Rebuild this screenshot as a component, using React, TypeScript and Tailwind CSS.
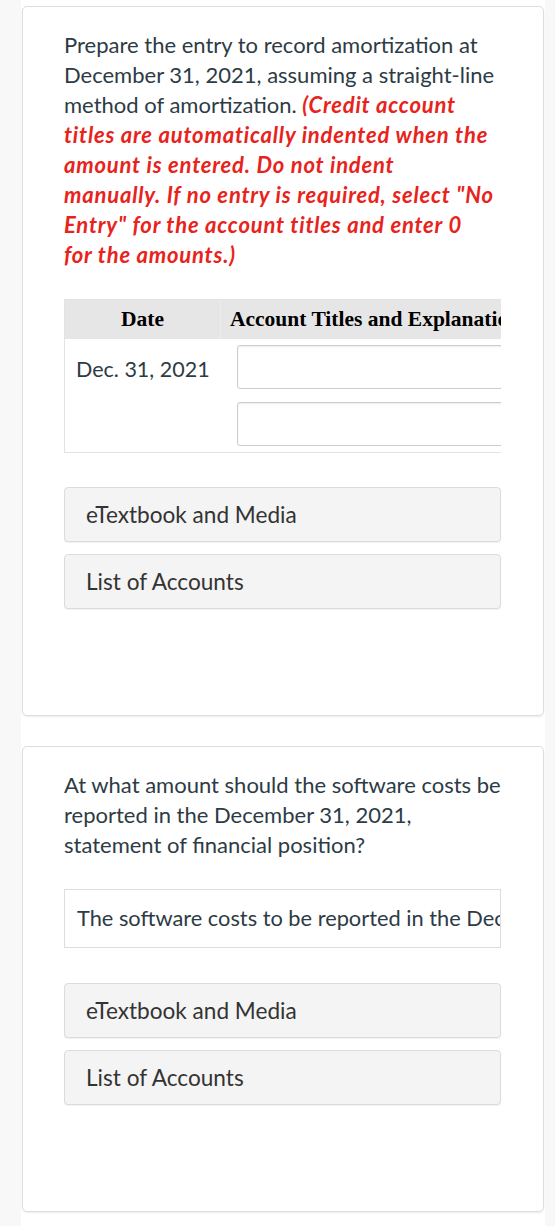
import React from 'react'

const lato = { fontFamily: 'Lato, "Open Sans", "Liberation Sans", sans-serif' }

function ResourceButton({ label }: { label: string }) {
  return (
    <div className="h-[55px] flex items-center rounded-[4px] border border-[#dcdcdc] bg-[#f4f4f4] pl-[21px] text-[22.6px] text-[#333333] shadow-[0_1px_1px_rgba(0,0,0,0.06)]">
      {label}
    </div>
  )
}

function Card({ children }: { children: React.ReactNode }) {
  return (
    <div className="ml-[1px] w-[522px] rounded-[5px] border border-[#dedede] bg-white pl-[41px] pr-[42px] pt-[23px] pb-[106px] shadow-[0_1px_2px_rgba(0,0,0,0.08)]">
      {children}
    </div>
  )
}

export default function App() {
  return (
    <div className="min-h-[1226px] bg-[#f8f8f8]" style={lato}>
      <div className="ml-[21px] w-[524px] min-h-[1226px] bg-white pt-[6px]">
        {/* Journal entry question */}
        <Card>
          <p className="text-[22px] leading-[30px] text-[#2d3b45]">
            Prepare the entry to record amortization at December 31, 2021, assuming a straight-line method of
            amortization.{' '}
            <span className="font-bold italic text-[#e8231b] tracking-[0.8px]">
              (Credit account
              <br />
              titles are automatically indented when the
              <br />
              amount is entered. Do not indent
              <br />
              manually. If no entry is required, select "No
              <br />
              Entry" for the account titles and enter 0
              <br />
              for the amounts.)
            </span>
          </p>

          <div className="mt-[29px] w-[437px] overflow-hidden">
            <div className="w-[640px] border border-[#e3e3e3]">
              <div
                className="flex h-[39px] items-center bg-[#e6e6e6] text-[21.5px] font-bold text-black"
                style={{ fontFamily: '"Liberation Serif", "DejaVu Serif", serif' }}
              >
                <div className="w-[155px] text-center">Date</div>
                <div className="flex-1 h-full flex items-center border-l border-[#ececec] pl-[9px]">
                  Account Titles and Explanation
                </div>
              </div>
              <div className="flex pt-[6px] pb-[6px]">
                <div className="w-[155px] pl-[11px] pt-[8px] text-[21.5px] text-[#2d3b45]">Dec. 31, 2021</div>
                <div className="flex-1 flex flex-col gap-[13px] pl-[17px]">
                  <div className="h-[44px] rounded-[3px] border border-[#cccccc] bg-white shadow-[inset_0_1px_2px_rgba(0,0,0,0.08)]" />
                  <div className="h-[44px] rounded-[3px] border border-[#cccccc] bg-white shadow-[inset_0_1px_2px_rgba(0,0,0,0.08)]" />
                </div>
              </div>
            </div>
          </div>

          <div className="mt-[34px] flex flex-col gap-[12px]">
            <ResourceButton label="eTextbook and Media" />
            <ResourceButton label="List of Accounts" />
          </div>
        </Card>

        <div className="h-[30px]" />

        {/* Reported amount question */}
        <Card>
          <p className="text-[22px] leading-[30px] text-[#2d3b45]">
            At what amount should the software costs be reported in the December 31, 2021, statement of
            financial position?
          </p>

          <div className="mt-[29px] h-[59px] w-[437px] overflow-hidden border border-[#dddddd] flex items-center pl-[12px]">
            <span className="whitespace-nowrap text-[21.8px] text-[#2d3b45]">
              The software costs to be reported in the December 31, 2021 statement of financial position
            </span>
          </div>

          <div className="mt-[35px] flex flex-col gap-[12px]">
            <ResourceButton label="eTextbook and Media" />
            <ResourceButton label="List of Accounts" />
          </div>
        </Card>
      </div>
    </div>
  )
}
